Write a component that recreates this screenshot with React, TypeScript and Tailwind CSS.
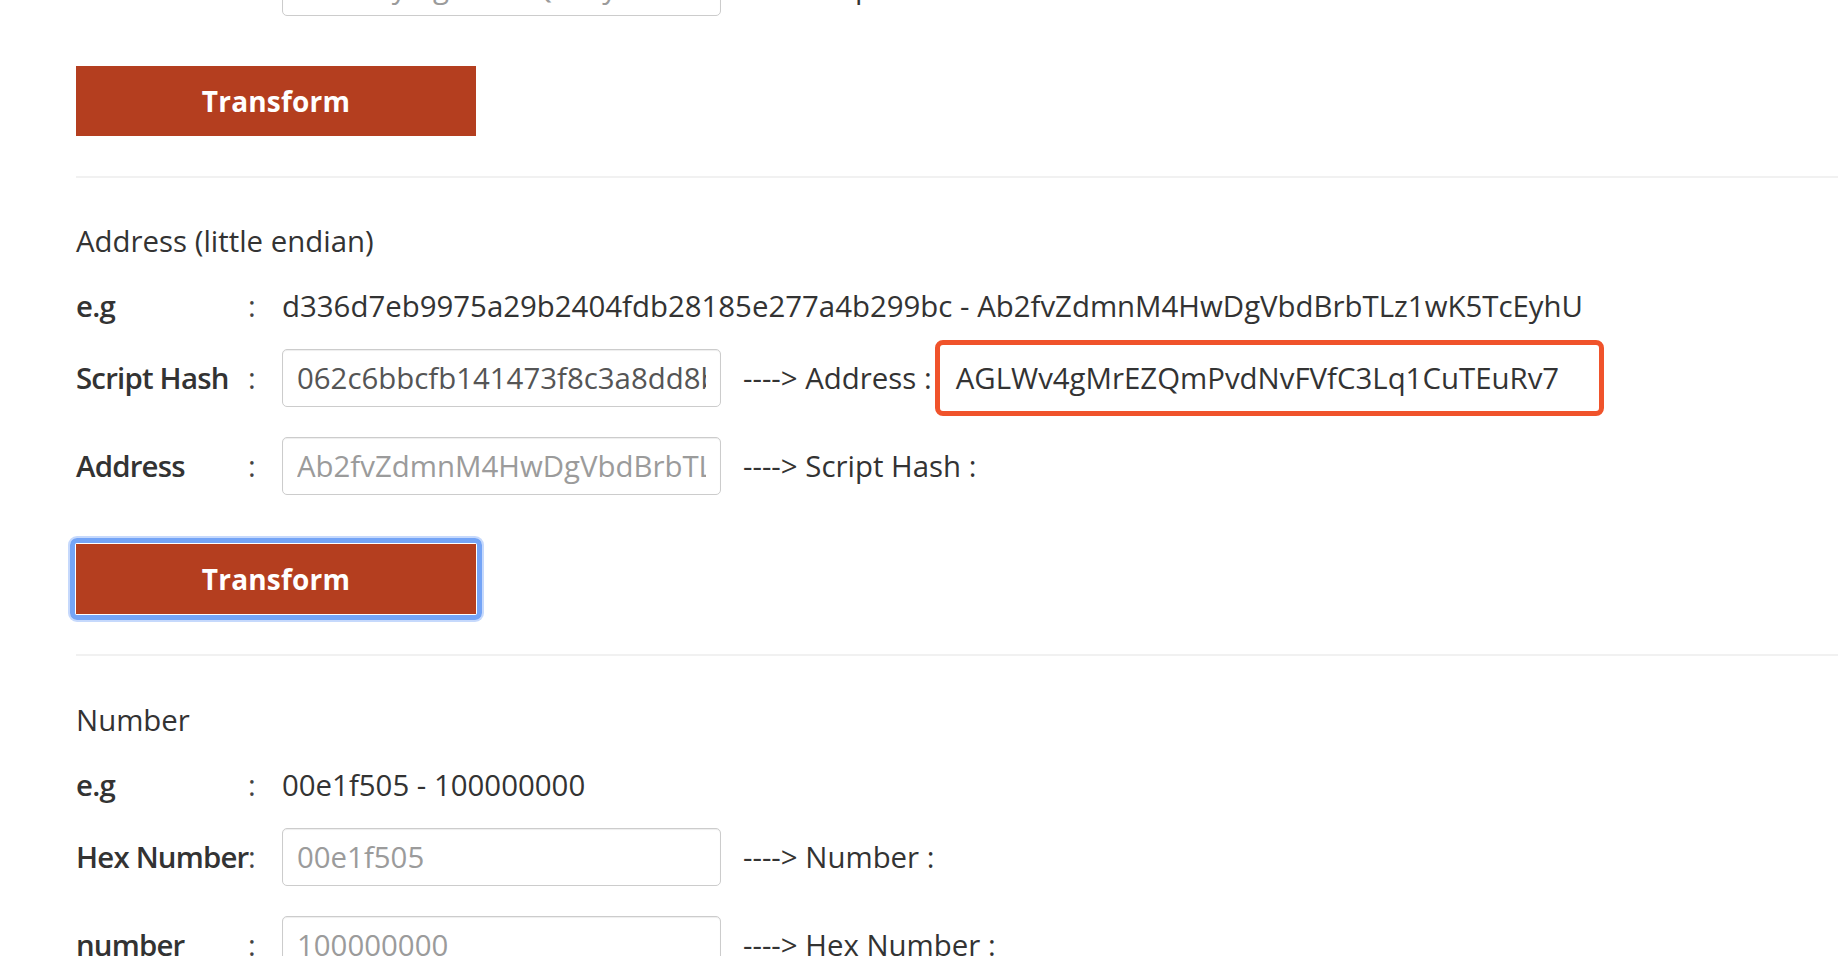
import React from "react";

// Converter page: address (little endian) and number sections, scrolled mid-page.

function Label({ children }: { children: React.ReactNode }) {
  return (
    <>
      <span className="w-[170px] shrink-0 whitespace-nowrap font-semibold tracking-[-0.8px] text-[#333]">{children}</span>
      <span className="w-[36px] shrink-0 pl-[2px] text-[#444]">:</span>
    </>
  );
}

function Field({ value, placeholder }: { value?: string; placeholder?: string }) {
  return (
    <input
      readOnly
      value={value ?? ""}
      placeholder={placeholder}
      className="h-[58px] w-[439px] shrink-0 rounded-[5px] border-[1.5px] border-[#cccccc] bg-white px-[14px] text-[29.4px] text-[#555] shadow-[inset_0_1px_1px_rgba(0,0,0,0.07)] outline-none placeholder:text-[#9b9b9b]"
    />
  );
}

function Arrow({ children }: { children: React.ReactNode }) {
  return <span className="ml-[22px] whitespace-nowrap text-[#333]">{children}</span>;
}

function TransformButton({ focused }: { focused?: boolean }) {
  return (
    <button className="relative h-[70px] w-[400px] shrink-0 bg-[#b43e1f] text-[28px] font-bold tracking-[0.2px] text-white">
      Transform
      {focused && (
        <span className="pointer-events-none absolute -inset-[6px] rounded-[7px] border-[5px] border-[#74a4f6] shadow-[0_0_0_2px_#c6d9fc]" />
      )}
    </button>
  );
}

function Divider() {
  return <div className="h-[2px] w-full bg-[#f1f1f1]" />;
}

export default function App() {
  return (
    <div className="min-h-screen overflow-hidden bg-white font-['Open_Sans','Noto_Sans',sans-serif] text-[29.4px] leading-[40px] text-[#333]">
      <div className="flex flex-col pl-[76px]">
        {/* tail of the previous section */}
        <div className="mt-[-42px] flex h-[58px] items-center">
          <Label>Address</Label>
          <Field placeholder="Ab2fvZyMg4HwDQrbdyTLz1wK5TcEh" />
          <Arrow>----&gt; Script Hash :</Arrow>
        </div>
        <div className="mt-[50px]">
          <TransformButton />
        </div>
        <div className="mt-[40px]">
          <Divider />
        </div>

        {/* Address (little endian) */}
        <h2 className="mt-[43px] h-[40px]">Address (little endian)</h2>
        <div className="mt-[25px] flex h-[40px] items-center">
          <Label>e.g</Label>
          <span className="whitespace-nowrap">d336d7eb9975a29b2404fdb28185e277a4b299bc - Ab2fvZdmnM4HwDgVbdBrbTLz1wK5TcEyhU</span>
        </div>
        <div className="mt-[23px] flex h-[58px] items-center">
          <Label>Script Hash</Label>
          <Field value="062c6bbcfb141473f8c3a8dd8b4f5e3d0a9a9e1c" />
          <Arrow>----&gt; Address :</Arrow>
          <span className="ml-[3px] flex h-[76px] w-[669px] shrink-0 items-center rounded-[8px] border-[5px] border-[#f0532b] pl-[16px] whitespace-nowrap">
            AGLWv4gMrEZQmPvdNvFVfC3Lq1CuTEuRv7
          </span>
        </div>
        <div className="mt-[30px] flex h-[58px] items-center">
          <Label>Address</Label>
          <Field placeholder="Ab2fvZdmnM4HwDgVbdBrbTLz1wK5TcEyhU" />
          <Arrow>----&gt; Script Hash :</Arrow>
        </div>
        <div className="mt-[49px]">
          <TransformButton focused />
        </div>
        <div className="mt-[40px]">
          <Divider />
        </div>

        {/* Number */}
        <h2 className="mt-[44px] h-[40px]">Number</h2>
        <div className="mt-[25px] flex h-[40px] items-center">
          <Label>e.g</Label>
          <span className="whitespace-nowrap">00e1f505 - 100000000</span>
        </div>
        <div className="mt-[23px] flex h-[58px] items-center">
          <Label>Hex Number</Label>
          <Field placeholder="00e1f505" />
          <Arrow>----&gt; Number :</Arrow>
        </div>
        <div className="mt-[30px] flex h-[58px] items-center">
          <Label>number</Label>
          <Field placeholder="100000000" />
          <Arrow>----&gt; Hex Number :</Arrow>
        </div>
        <div className="h-[80px]" />
      </div>
    </div>
  );
}
